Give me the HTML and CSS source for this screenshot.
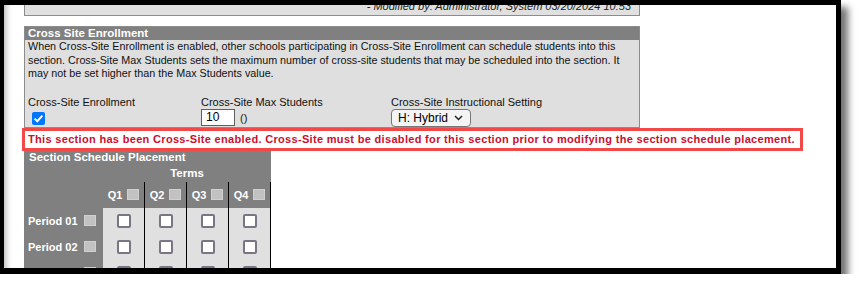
FILE: index.html
```html
<!DOCTYPE html>
<html lang="en">
<head>
<meta charset="utf-8">
<title>Cross Site Enrollment</title>
<link rel="stylesheet" href="styles.css">
</head>
<body>
<div class="frame">
  <div class="page">
    <div class="modified">- Modified by: Administrator, System 03/20/2024 10:53</div>

    <div class="panel">
      <div class="panel-head">Cross Site Enrollment</div>
      <div class="panel-body">
        <p class="desc">When Cross-Site Enrollment is enabled, other schools participating in Cross-Site Enrollment can schedule students into this section. Cross-Site Max Students sets the maximum number of cross-site students that may be scheduled into the section. It may not be set higher than the Max Students value.</p>
        <div class="fields">
          <div class="field">
            <span class="label">Cross-Site Enrollment</span>
            <span class="check">
              <svg width="13" height="13" viewBox="0 0 13 13"><path d="M2.6 6.6 L5.3 9.2 L10.4 3.6" fill="none" stroke="#fff" stroke-width="2"/></svg>
            </span>
          </div>
          <div class="field">
            <span class="label">Cross-Site Max Students</span>
            <div class="inline">
              <span class="text-input">10</span>
              <span class="parens">()</span>
            </div>
          </div>
          <div class="field">
            <span class="label">Cross-Site Instructional Setting</span>
            <span class="select">H: Hybrid
              <svg class="chev" width="9" height="6" viewBox="0 0 9 6"><path d="M1 1 L4.5 4.5 L8 1" fill="none" stroke="#222" stroke-width="1.5"/></svg>
            </span>
          </div>
        </div>
      </div>
    </div>

    <div class="alert">This section has been Cross-Site enabled. Cross-Site must be disabled for this section prior to modifying the section schedule placement.</div>

    <div class="placement">
      <div class="placement-head">Section Schedule Placement</div>
      <div class="terms-title">Terms</div>
      <div class="grid">
        <div class="corner"></div>
        <div class="qhead">Q1 <span class="dis"></span></div>
        <div class="qhead">Q2 <span class="dis"></span></div>
        <div class="qhead">Q3 <span class="dis"></span></div>
        <div class="qhead">Q4 <span class="dis"></span></div>

        <div class="period">Period 01 <span class="dis"></span></div>
        <div class="cell"><span class="box"></span></div>
        <div class="cell"><span class="box"></span></div>
        <div class="cell"><span class="box"></span></div>
        <div class="cell"><span class="box"></span></div>

        <div class="period">Period 02 <span class="dis"></span></div>
        <div class="cell"><span class="box"></span></div>
        <div class="cell"><span class="box"></span></div>
        <div class="cell"><span class="box"></span></div>
        <div class="cell"><span class="box"></span></div>

        <div class="period period-end"><span class="dis"></span></div>
        <div class="cell"><span class="box"></span></div>
        <div class="cell"><span class="box"></span></div>
        <div class="cell"><span class="box"></span></div>
        <div class="cell"><span class="box"></span></div>
      </div>
    </div>
  </div>
</div>
</body>
</html>
```

FILE: styles.css
```css
html, body {
  margin: 0;
  padding: 0;
  background: #fff;
}

body {
  font-family: "Liberation Sans", Arial, sans-serif;
  color: #111;
}

.frame {
  width: 832px;
  height: 263px;
  border-style: solid;
  border-color: #000;
  border-width: 5px 5px 6px 4px;
  background: #fff;
  overflow: hidden;
  box-shadow: 7px 7px 7px rgba(0, 0, 0, 0.55), inset 7px 0 6px -5px rgba(0, 0, 0, 0.3);
}

.page {
  padding-left: 20px;
}

.modified {
  box-sizing: border-box;
  width: 616px;
  height: 20px;
  margin-top: -9px;
  border: 1px solid #8c8c8c;
  background: #e0e0e0;
  font-style: italic;
  font-size: 11px;
  line-height: 18px;
  text-align: right;
  padding-right: 8px;
  color: #222;
}

.panel {
  box-sizing: border-box;
  width: 616px;
  margin-top: 10px;
  border: 1px solid #8c8c8c;
  background: #dfdfdf;
}

.panel-head {
  background: #808080;
  color: #fff;
  font-weight: bold;
  font-size: 11.5px;
  line-height: 13px;
  padding-left: 3px;
}

.panel-body {
  padding: 0 3px;
}

.desc {
  margin: 0;
  font-size: 10.75px;
  line-height: 13.5px;
  color: #111;
}

.fields {
  display: grid;
  grid-template-columns: 173px 190px auto;
  margin-top: 15px;
  font-size: 11px;
}

.field {
  display: flex;
  flex-direction: column;
  align-items: flex-start;
}

.label {
  line-height: 13px;
  color: #111;
}

.check {
  width: 13px;
  height: 13px;
  margin: 3px 0 1px 4px;
  border-radius: 2px;
  background: #0075ff;
  display: flex;
}

.inline {
  display: flex;
  align-items: center;
  gap: 5px;
  height: 18px;
}

.text-input {
  box-sizing: border-box;
  width: 34px;
  height: 17px;
  border: 1px solid #5f5f5f;
  background: #fff;
  padding-left: 4px;
  font-size: 12px;
  line-height: 15px;
  color: #000;
}

.parens {
  font-size: 11px;
  color: #222;
}

.select {
  box-sizing: border-box;
  width: 80px;
  height: 18px;
  border: 1px solid #767676;
  border-radius: 4px;
  background: #f4f4f4;
  display: flex;
  align-items: center;
  justify-content: space-between;
  padding: 0 7px 0 6px;
  font-size: 12px;
  color: #000;
}

.alert {
  box-sizing: border-box;
  width: 781px;
  height: 23px;
  margin-left: -2px;
  border: 3px solid #f24848;
  background: #fff;
  padding-left: 3px;
  color: #c8102e;
  font-weight: bold;
  font-size: 11px;
  letter-spacing: 0.32px;
  line-height: 17px;
  white-space: nowrap;
}

.placement {
  width: 247px;
  background: #808080;
  color: #fff;
  font-weight: bold;
}

.placement-head {
  font-size: 11.5px;
  line-height: 13px;
  padding-left: 5px;
}

.terms-title {
  width: 168px;
  margin-left: 79px;
  text-align: center;
  font-size: 11.5px;
  line-height: 18px;
}

.grid {
  display: grid;
  grid-template-columns: 79px repeat(4, 42px);
  grid-auto-rows: 26px;
  font-size: 11px;
}

.qhead,
.cell {
  box-sizing: border-box;
  border-right: 1px solid #000;
  display: flex;
  align-items: center;
  justify-content: center;
}

.qhead {
  gap: 5px;
}

.cell {
  background: #e0e0e0;
}

.period {
  display: flex;
  align-items: center;
  gap: 6px;
  padding-left: 4px;
}

.period-end {
  justify-content: flex-end;
  padding-right: 7px;
}

.dis {
  box-sizing: border-box;
  width: 12px;
  height: 11px;
  background: #c2c2c2;
  border: 1px solid #d0d0d0;
}

.box {
  box-sizing: border-box;
  width: 14px;
  height: 14px;
  background: #fff;
  border: 2px solid #7a7585;
  border-radius: 2px;
}
```
